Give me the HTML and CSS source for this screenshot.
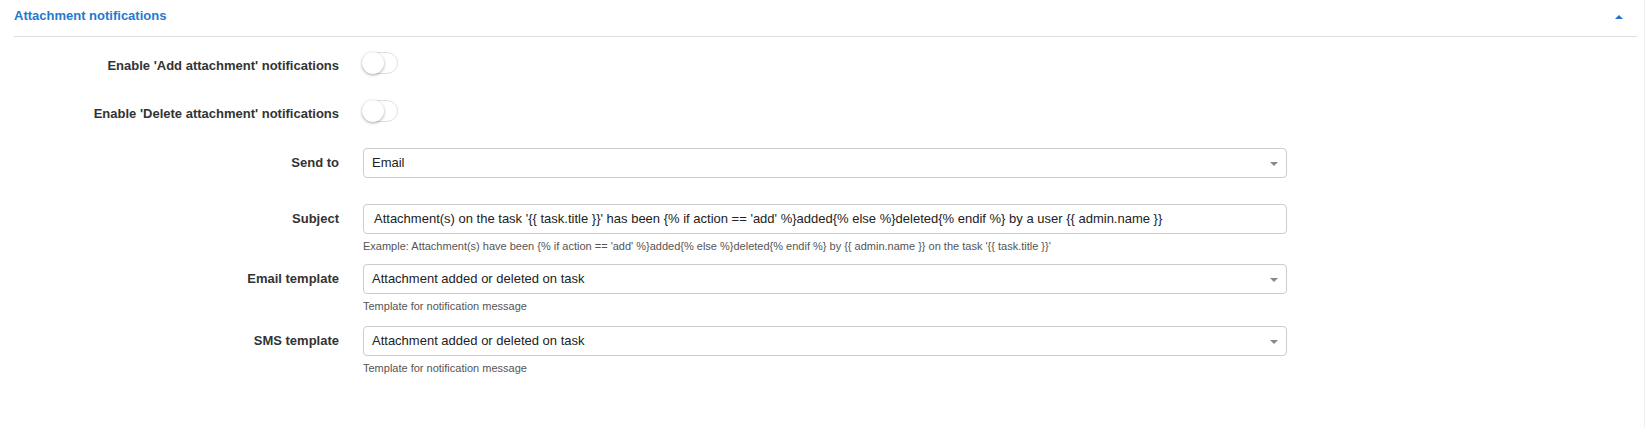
FILE: index.html
```html
<!DOCTYPE html>
<html lang="en">
<head>
<meta charset="utf-8">
<title>Attachment notifications</title>
<link rel="stylesheet" href="styles.css">
</head>
<body>
<div class="page">
  <div class="panel">
    <div class="panel-heading">
      <span class="panel-title">Attachment notifications</span>
      <span class="collapse-caret"></span>
    </div>
    <div class="form">
      <div class="row row-toggle">
        <div class="label">Enable 'Add attachment' notifications</div>
        <div class="control"><span class="toggle"><span class="knob"></span></span></div>
      </div>
      <div class="row row-toggle">
        <div class="label">Enable 'Delete attachment' notifications</div>
        <div class="control"><span class="toggle"><span class="knob"></span></span></div>
      </div>
      <div class="row row-send">
        <div class="label">Send to</div>
        <div class="control">
          <div class="select"><span class="select-text">Email</span><span class="select-arrow"></span></div>
        </div>
      </div>
      <div class="row row-subject">
        <div class="label">Subject</div>
        <div class="control">
          <div class="input">Attachment(s) on the task '{{ task.title }}' has been {% if action == 'add' %}added{% else %}deleted{% endif %} by a user {{ admin.name }}</div>
          <div class="help">Example: Attachment(s) have been {% if action == 'add' %}added{% else %}deleted{% endif %} by {{ admin.name }} on the task '{{ task.title }}'</div>
        </div>
      </div>
      <div class="row row-email">
        <div class="label">Email template</div>
        <div class="control">
          <div class="select"><span class="select-text">Attachment added or deleted on task</span><span class="select-arrow"></span></div>
          <div class="help">Template for notification message</div>
        </div>
      </div>
      <div class="row row-sms">
        <div class="label">SMS template</div>
        <div class="control">
          <div class="select"><span class="select-text">Attachment added or deleted on task</span><span class="select-arrow"></span></div>
          <div class="help">Template for notification message</div>
        </div>
      </div>
    </div>
  </div>
</div>
</body>
</html>
```

FILE: styles.css
```css
html, body {
  margin: 0;
  padding: 0;
  background: #ffffff;
}

body {
  font-family: "Liberation Sans", Arial, sans-serif;
  font-size: 13px;
  color: #333333;
}

.page {
  width: 1645px;
  min-height: 427px;
  border-right: 1px solid #eeeeee;
  box-sizing: border-box;
}

.panel {
  margin-left: 14px;
  width: 1623px;
}

.panel-heading {
  height: 36px;
  border-bottom: 1px solid #dddddd;
  display: flex;
  align-items: flex-start;
  justify-content: space-between;
  padding-right: 14px;
}

.panel-title {
  margin-top: 8px;
  line-height: 16px;
  font-weight: bold;
  font-size: 13px;
  color: #2479cf;
}

.collapse-caret {
  margin-top: 15px;
  width: 0;
  height: 0;
  border-left: 4px solid transparent;
  border-right: 4px solid transparent;
  border-bottom: 4px solid #1f74c8;
}

.form {
  padding-top: 15px;
}

.row {
  display: flex;
  align-items: flex-start;
}

.label {
  width: 325px;
  flex: none;
  text-align: right;
  font-weight: bold;
  color: #333333;
  font-size: 13px;
  line-height: 30px;
}

.control {
  margin-left: 24px;
  width: 924px;
}

.row-toggle {
  height: 22px;
  margin-bottom: 26px;
}

.row-toggle .label {
  line-height: 22px;
  padding-top: 3px;
}

.row-toggle .control {
  margin-left: 23px;
}

.toggle {
  display: block;
  position: relative;
  width: 36px;
  height: 22px;
  box-sizing: border-box;
  border: 1px solid #dfdfdf;
  border-radius: 11px;
  background: #ffffff;
}

.knob {
  position: absolute;
  left: -1px;
  top: -1px;
  width: 22px;
  height: 22px;
  border-radius: 50%;
  background: #ffffff;
  box-shadow: 0 1px 3px rgba(0, 0, 0, 0.35);
}

.select, .input {
  height: 30px;
  box-sizing: border-box;
  border: 1px solid #cccccc;
  border-radius: 4px;
  background: #ffffff;
  color: #222222;
  font-size: 13px;
  line-height: 28px;
  white-space: nowrap;
  overflow: hidden;
}

.select {
  display: flex;
  justify-content: space-between;
  align-items: center;
  padding: 0 8px;
}

.input {
  padding: 0 10px;
}

.select-arrow {
  width: 0;
  height: 0;
  margin-top: 2px;
  border-left: 4px solid transparent;
  border-right: 4px solid transparent;
  border-top: 4px solid #888888;
}

.help {
  margin-top: 5px;
  font-size: 11px;
  line-height: 14px;
  color: #555555;
}

.row-send {
  margin-bottom: 26px;
}

.row-subject {
  margin-bottom: 11px;
}

.row-email {
  margin-bottom: 13px;
}
```
